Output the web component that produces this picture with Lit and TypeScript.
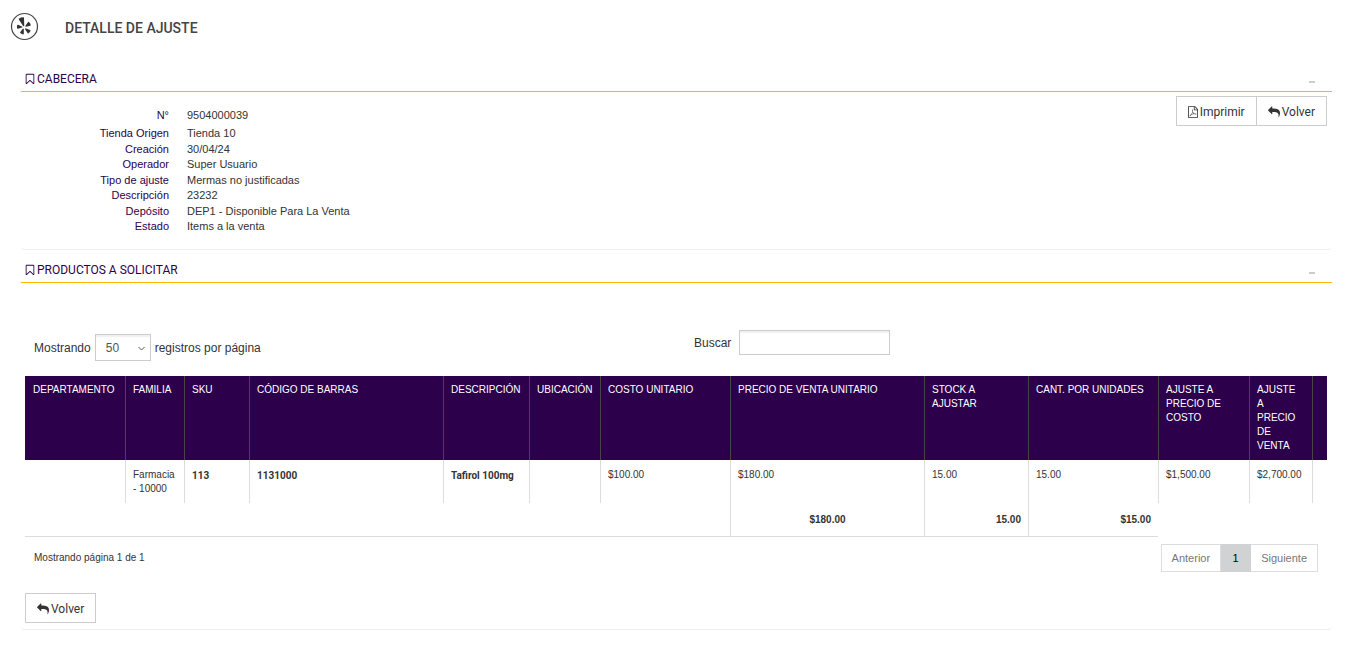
import { LitElement, html, css, svg } from "lit";
import { customElement, property } from "lit/decorators.js";

const ICONS: Record<string, unknown> = {
  reply: svg`<path transform="translate(1792 0) scale(-1 1)" d="M1792 640q0 26-19 45l-512 512q-19 19-45 19t-45-19-19-45v-256h-224q-98 0-175.5 6t-154 21.5-133 42.5-105.5 69.5-80 101-48.5 138.5-17.5 181q0 55 5 123 0 6 2.5 23.5t2.5 26.5q0 15-8.5 25t-23.5 10q-16 0-28-17-7-9-13-22t-13.5-30-10.5-24q-127-285-127-451 0-199 53-333 162-403 875-403h224v-256q0-26 19-45t45-19 45 19l512 512q19 19 19 45z"/>`,
  bookmark: svg`<path d="M1408 256h-1024v1242l423-406 89-85 89 85 423 406v-1242zm12-128q23 0 44 9 33 13 52.5 41t19.5 62v1289q0 34-19.5 62t-52.5 41q-19 8-44 8-48 0-83-32l-441-424-441 424q-36 33-83 33-23 0-44-9-33-13-52.5-41t-19.5-62v-1289q0-34 19.5-62t52.5-41q21-9 44-9h1048z"/>`,
  pdf: svg`<path d="M1596 380q28 28 48 76t20 88v1152q0 40-28 68t-68 28h-1344q-40 0-68-28t-28-68v-1600q0-40 28-68t68-28h896q40 0 88 20t76 48zm-444-244v376h376q-10-29-22-41l-313-313q-12-12-41-22zm384 1528v-1024h-416q-40 0-68-28t-28-68v-416h-768v1536h1280zm-514-593q33 26 84 56 59-7 117-7 147 0 177 49 16 22 2 52 0 1-1 2l-2 2v1q-6 38-71 38-48 0-115-20t-130-53q-221 24-392 83-153 262-242 262-15 0-28-7l-24-12q-1-1-6-5-10-10-6-36 9-40 56-91.500t132-96.500q14-9 23 6 2 2 2 4 52-85 107-197 68-136 104-262-24-82-30.500-159.500t6.500-127.500q11-40 42-40h22q23 0 35 15 18 21 9 68-2 6-4 8 1 3 1 8v30q-2 123-14 192 55 164 146 238zm-576 411q52-24 137-158-51 40-87.500 84t-49.500 74zm398-920q-15 42-2 132 1-7 7-44 0-3 7-43 1-4 4-8-1-1-1-2t-1-2q-1-22-13-36 0 1-1 2v2zm-124 661q135-54 284-81-2-1-13-9.500t-16-13.500q-76-67-127-176-27 86-83 197-30 56-45 83zm646-16q-24-24-140-24 76 28 124 28 14 0 18-1 0-1-2-3z"/>`,
};

const icon = (name: string) =>
  html`<svg class="icon ${name}" viewBox=${name === "pdf" ? "128 0 1536 1792" : "0 0 1792 1792"} aria-hidden="true">${ICONS[name]}</svg>`;

const shared = css`
  * { box-sizing: border-box; }
  .icon { width: 12px; height: 12px; fill: currentColor; flex: none; }
  .pdf { width: 10px; }
  .btn {
    display: inline-flex; align-items: center; gap: 2px;
    height: 30px; padding: 1px 11px 0;
    font: 12px/18px Roboto, sans-serif; color: #333;
    background: #fff; border: 1px solid #ccc; border-radius: 0; cursor: pointer;
  }
`;

@customElement("titled-panel")
export class TitledPanel extends LitElement {
  @property() heading = "";

  static styles = [shared, css`
    :host { display: block; border-bottom: 1px solid #eee; border-radius: 4px; }
    .head {
      display: flex; align-items: center; justify-content: space-between;
      height: 27px; padding: 2px 17px 0 3px; border-bottom: 1px solid #ffb400;
    }
    h2 {
      display: flex; align-items: center; gap: 1px; margin: 0;
      font: 400 12px/18px Roboto, sans-serif; color: #2d004b;
    }
    .collapse { width: 6px; height: 18px; padding: 6px 0 0; border: 0; background: none; cursor: pointer; }
    .collapse span { display: block; height: 2px; background: #ccc; }
  `];

  render() {
    return html`
      <header class="head">
        <h2>${icon("bookmark")}${this.heading}</h2>
        <button class="collapse" aria-label="Contraer"><span></span></button>
      </header>
      <slot></slot>
    `;
  }
}

const DETAILS = [
  ["N°", "9504000039"],
  ["Tienda Origen", "Tienda 10"],
  ["Creación", "30/04/24"],
  ["Operador", "Super Usuario"],
  ["Tipo de ajuste", "Mermas no justificadas"],
  ["Descripción", "23232"],
  ["Depósito", "DEP1 - Disponible Para La Venta"],
  ["Estado", "Items a la venta"],
];

const COLUMNS: { title: string; width: number; value: string; strong?: boolean }[] = [
  { title: "DEPARTAMENTO", width: 100, value: "" },
  { title: "FAMILIA", width: 59, value: "Farmacia - 10000" },
  { title: "SKU", width: 65, value: "113", strong: true },
  { title: "CÓDIGO DE BARRAS", width: 194, value: "1131000", strong: true },
  { title: "DESCRIPCIÓN", width: 86, value: "Tafirol 100mg", strong: true },
  { title: "UBICACIÓN", width: 71, value: "" },
  { title: "COSTO UNITARIO", width: 130, value: "$100.00" },
  { title: "PRECIO DE VENTA UNITARIO", width: 194, value: "$180.00" },
  { title: "STOCK A AJUSTAR", width: 104, value: "15.00" },
  { title: "CANT. POR UNIDADES", width: 130, value: "15.00" },
  { title: "AJUSTE A PRECIO DE COSTO", width: 91, value: "$1,500.00" },
  { title: "AJUSTE A PRECIO DE VENTA", width: 63, value: "$2,700.00" },
  { title: "", width: 15, value: "" },
];

@customElement("app-root")
export class AppRoot extends LitElement {
  static styles = [shared, css`
    :host {
      display: block; min-height: 100vh; background: #fff; color: #333;
      font: 12px/18px "Liberation Sans", Arial, sans-serif;
    }
    .title { display: flex; align-items: center; gap: 26px; padding: 12px 10px 0; }
    .title svg { width: 29px; height: 29px; }
    h1 { margin: 0; padding-top: 2px; font: 500 14px/18px Roboto, sans-serif; color: #444; }
    main { padding: 24px 13px 0 21px; }
    .summary { display: flex; justify-content: space-between; align-items: flex-start; padding: 4px 5px 15px 0; }
    dl { margin: 0; padding-top: 12px; font-size: 11px; line-height: 15px; }
    .field { display: grid; grid-template-columns: 148px 1fr; gap: 18px; }
    .field:first-child { padding-bottom: 3px; }
    dt { text-align: right; color: #2d004b; }
    dd { margin: 0; }
    .fields { display: flex; flex-direction: column; justify-content: space-between; min-height: 138px; }
    .group { display: flex; }
    .group .btn + .btn { margin-left: -1px; }
    .products { padding: 47px 5px 6px 4px; }
    .second { margin-top: 6px; }
    .tools { display: grid; grid-template-columns: 660px 1fr; padding: 0 9px 15px; }
    .length { display: flex; align-items: center; gap: 4px; padding-top: 4px; }
    .search { display: flex; align-items: center; gap: 8px; height: 25px; }
    select, input {
      font: 12px/18px "Liberation Sans", Arial, sans-serif; color: #555;
      background: #fff; border: 1px solid #ccc; border-radius: 0;
      box-shadow: inset 0 2px 1px rgba(0, 0, 0, 0.06);
    }
    .select { position: relative; display: flex; }
    select { appearance: none; width: 56px; height: 27px; padding: 0 10px; }
    .select svg { position: absolute; right: 6px; top: 11px; width: 7px; height: 7px; fill: none; stroke: #555; pointer-events: none; }
    input { width: 151px; height: 25px; flex: none; }
    table { width: 100%; table-layout: fixed; border-collapse: separate; border-spacing: 0; font-size: 10px; line-height: 14px; }
    th, td { text-align: left; vertical-align: top; font-weight: 400; border-left: 1px solid #ddd; padding: 8px 7px 7px; }
    th { background: #2d004b; color: #fff; border-color: #444; padding: 7px 10px 7px 7px; }
    th:last-child { padding-right: 0; }
    tr > :first-child { border-left: 0; padding-left: 8px; }
    .strong { font-family: Roboto, sans-serif; font-weight: 700; padding-top: 9px; padding-bottom: 6px; }
    tfoot td { font-weight: 700; padding: 10px 7px 9px; border-bottom: 1px solid #ddd; text-align: right; }
    tfoot .mid { text-align: center; }
    tfoot .blank { border: 0; }
    .foot { display: flex; justify-content: space-between; align-items: center; padding: 7px 9px 0; font-size: 10px; }
    .pager { display: flex; }
    .pager button {
      min-width: 30px; height: 28px; padding: 0 10px; color: #777; background: #fff; border: 1px solid #ddd;
      font: 11px/16px "Liberation Sans", Arial, sans-serif;
    }
    .pager button + button { border-left: 0; }
    .pager .current { color: #000; background: #d0d2d4; border-color: #d0d2d4; }
    .back { margin-top: 21px; }
  `];

  render() {
    return html`
      <header class="title">
        <svg viewBox="0 0 29 29" aria-hidden="true">
          <circle cx="14.500" cy="14.500" r="13" fill="none" stroke="#444" stroke-width="1.200" />
          <g fill="#333" transform="translate(-1.800 -1.600) scale(1.130)">
            <path d="M9.600 7.200q2-1.400 3.900-1.200.5.100.5.700l.2 6.600q0 1.300-1 .5l-3.800-5.700q-.2-.5.2-.9z" />
            <path d="M8 13q.3-.5.800-.3l3.400 1.500q.8.500 0 1l-3.600 1q-.7.100-.8-.6-.1-1.300.2-2.600z" />
            <path d="M12.900 16.200q.8-.6.900.3v4.200q-.1.700-.8.600-1.400-.3-2.300-1.200-.4-.4 0-.9z" />
            <path d="M15 16.300q.1-.8.900-.3l3.500 1.300q.6.300.3.900-.6 1.200-1.700 2.100-.5.300-.9-.2l-2-3.100q-.2-.4-.1-.7z" />
            <path d="M15.300 13.500l2.100-3.100q.4-.5.900-.1 1.200 1 1.600 2.400.2.600-.4.900l-3.600.9q-1.200.1-.6-1z" />
          </g>
        </svg>
        <h1>DETALLE DE AJUSTE</h1>
      </header>
      <main>
        <titled-panel heading="CABECERA">
          <div class="summary">
            <dl class="fields">
              ${DETAILS.map(([k, v]) => html`<div class="field"><dt>${k}</dt><dd>${v}</dd></div>`)}
            </dl>
            <div class="group">
              <button class="btn">${icon("pdf")}Imprimir</button>
              <button class="btn">${icon("reply")}Volver</button>
            </div>
          </div>
        </titled-panel>
        <titled-panel class="second" heading="PRODUCTOS A SOLICITAR">
          <div class="products">
            <div class="tools">
              <div class="length">
                <label for="length">Mostrando</label>
                <span class="select">
                  <select id="length"><option>50</option></select>
                  <svg viewBox="0 0 7 7" aria-hidden="true"><path d="M.5 2l3 3 3-3" /></svg>
                </span>
                <label for="length">registros por página</label>
              </div>
              <div class="search"><label for="search">Buscar</label><input id="search" type="search" /></div>
            </div>
            <table>
              <colgroup>${COLUMNS.map((c) => html`<col style="width:${c.width}px" />`)}</colgroup>
              <thead><tr>${COLUMNS.map((c) => html`<th scope="col">${c.title}</th>`)}</tr></thead>
              <tbody><tr>${COLUMNS.map((c) => html`<td class=${c.strong ? "strong" : ""}>${c.value}</td>`)}</tr></tbody>
              <tfoot>
                <tr>
                  <td colspan="7"></td>
                  <td class="mid">$180.00</td>
                  <td>15.00</td>
                  <td>$15.00</td>
                  <td class="blank" colspan="3"></td>
                </tr>
              </tfoot>
            </table>
            <div class="foot">
              <span>Mostrando página 1 de 1</span>
              <nav class="pager" aria-label="Paginación">
                <button>Anterior</button><button class="current">1</button><button>Siguiente</button>
              </nav>
            </div>
            <button class="btn back">${icon("reply")}Volver</button>
          </div>
        </titled-panel>
      </main>
    `;
  }
}
